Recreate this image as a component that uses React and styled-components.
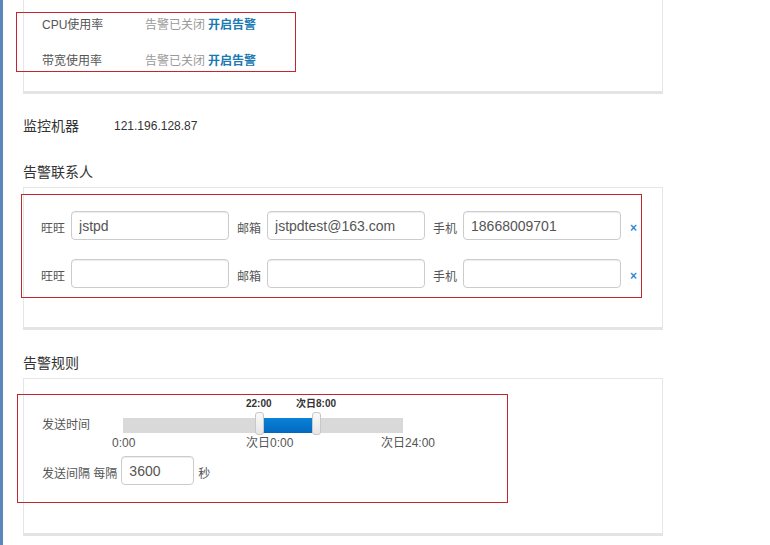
import React from "react";
import styled, { createGlobalStyle } from "styled-components";

const GlobalStyle = createGlobalStyle`
  html, body { margin: 0; padding: 0; background: #fff; }
  body {
    font-family: "Liberation Sans", Arial, "Noto Sans CJK SC", sans-serif;
    font-size: 12px;
    color: #555;
  }
`;

const Page = styled.div`
  display: flex;
  height: 545px;
  overflow: hidden;
`;

const Strip = styled.div`
  width: 3px;
  flex-shrink: 0;
  background: #5b88ba;
`;

const Main = styled.div`
  padding-left: 20px;
  width: 640px;
`;

const Panel = styled.div`
  box-sizing: border-box;
  border: 1px solid #e6e6e6;
  border-top: ${(p) => (p.$open ? "none" : "1px solid #e6e6e6")};
  border-bottom: 3px solid #e4e4e4;
  padding: ${(p) => p.$top}px 0 ${(p) => p.$bottom}px;
`;

const Highlight = styled.div`
  box-sizing: border-box;
  border: 1px solid #c1272d;
  margin-left: ${(p) => p.$shift}px;
  width: ${(p) => p.$w}px;
  height: ${(p) => p.$h}px;
  padding: ${(p) => p.$pad};
  display: flex;
  flex-direction: column;
  gap: ${(p) => p.$gap || 0}px;
`;

const StatusRow = styled.div`
  display: flex;
  line-height: 16px;
  font-size: 12px;
`;

const StatusName = styled.span`
  width: 103px;
  color: #555;
`;

const StatusOff = styled.span`
  color: #999;
`;

const StatusLink = styled.a`
  color: #1a78b2;
  font-weight: bold;
  text-decoration: none;
  margin-left: 3px;
`;

const InfoRow = styled.div`
  display: flex;
  align-items: center;
  margin-top: 22px;
  line-height: 20px;
`;

const InfoLabel = styled.span`
  width: 91px;
  font-size: 14px;
  color: #333;
`;

const InfoValue = styled.span`
  font-size: 12px;
  color: #333;
`;

const Heading = styled.div`
  margin: ${(p) => p.$mt}px 0 5px;
  font-size: 14px;
  line-height: 20px;
  color: #333;
`;

const ContactRow = styled.div`
  display: flex;
  align-items: center;
  height: 29px;
  gap: 8px;
`;

const Field = styled.div`
  display: flex;
  align-items: center;
  gap: 6px;
`;

const FieldLabel = styled.span`
  padding-top: 6px;
  line-height: 16px;
  font-size: 12px;
  color: #555;
`;

const TextInput = styled.input`
  box-sizing: border-box;
  width: ${(p) => p.$w}px;
  height: 29px;
  border: 1px solid #ccc;
  border-radius: 4px;
  padding: 0 7px;
  font-family: "Liberation Sans", Arial, sans-serif;
  font-size: 14px;
  color: #555;
  background: #fff;
  box-shadow: inset 0 1px 1px rgba(0, 0, 0, 0.075);
  outline: none;
`;

const Remove = styled.span`
  margin-left: 1px;
  padding-top: 4px;
  font-size: 12px;
  font-weight: bold;
  color: #2d8ad6;
  cursor: pointer;
`;

const TimeRow = styled.div`
  display: flex;
  align-items: center;
  padding-top: 22px;
`;

const RuleLabel = styled.span`
  width: 81px;
  line-height: 16px;
  font-size: 12px;
  color: #555;
`;

const Track = styled.div`
  position: relative;
  width: 280px;
  height: 15px;
  background: #d9d9d9;
`;

const Fill = styled.div`
  position: absolute;
  top: 0;
  height: 15px;
  background: linear-gradient(#0b82d9, #0069bf);
`;

const Handle = styled.div`
  position: absolute;
  top: -6px;
  box-sizing: border-box;
  width: 9px;
  height: 23px;
  border: 1px solid #c8c8c8;
  border-radius: 3px;
  background: linear-gradient(#fafafa, #e6e6e6);
`;

const HandleLabel = styled.span`
  position: absolute;
  top: -20px;
  line-height: 12px;
  font-size: 10px;
  font-weight: bold;
  color: #333;
  white-space: nowrap;
`;

const AxisLabel = styled.span`
  position: absolute;
  top: 17px;
  line-height: 16px;
  font-size: 12px;
  color: #555;
  white-space: nowrap;
`;

const IntervalRow = styled.div`
  display: flex;
  align-items: center;
  height: 29px;
  margin-top: 23px;
`;

const InlineText = styled.span`
  padding-top: 6px;
  line-height: 16px;
  font-size: 12px;
  color: #555;
  margin-left: ${(p) => p.$ml || 0}px;
  margin-right: ${(p) => p.$mr || 0}px;
`;

const statuses = ["CPU使用率", "带宽使用率"];

const contacts = [
  { ww: "jstpd", mail: "jstpdtest@163.com", phone: "18668009701" },
  { ww: "", mail: "", phone: "" },
];

const handles = [
  { left: 132, label: "22:00", labelLeft: 123 },
  { left: 189, label: "次日8:00", labelLeft: 173 },
];

const axis = [
  { left: -11, text: "0:00" },
  { left: 123, text: "次日0:00" },
  { left: 258, text: "次日24:00" },
];

export default function App() {
  return (
    <>
      <GlobalStyle />
      <Page>
        <Strip />
        <Main>
          <Panel $open $top={12} $bottom={19}>
            <Highlight $shift={-8} $w={280} $h={60} $pad="4px 0 0 25px" $gap={20}>
              {statuses.map((s) => (
                <StatusRow key={s}>
                  <StatusName>{s}</StatusName>
                  <StatusOff>告警已关闭</StatusOff>
                  <StatusLink href="#">开启告警</StatusLink>
                </StatusRow>
              ))}
            </Highlight>
          </Panel>

          <InfoRow>
            <InfoLabel>监控机器</InfoLabel>
            <InfoValue>121.196.128.87</InfoValue>
          </InfoRow>

          <Heading $mt={26}>告警联系人</Heading>
          <Panel $top={6} $bottom={29}>
            <Highlight $shift={-3} $w={621} $h={104} $pad="16px 0 0 19px" $gap={19}>
              {contacts.map((c, i) => (
                <ContactRow key={i}>
                  <Field>
                    <FieldLabel>旺旺</FieldLabel>
                    <TextInput $w={158} defaultValue={c.ww} />
                  </Field>
                  <Field>
                    <FieldLabel>邮箱</FieldLabel>
                    <TextInput $w={158} defaultValue={c.mail} />
                  </Field>
                  <Field>
                    <FieldLabel>手机</FieldLabel>
                    <TextInput $w={158} defaultValue={c.phone} />
                  </Field>
                  <Remove>×</Remove>
                </ContactRow>
              ))}
            </Highlight>
          </Panel>

          <Heading $mt={23}>告警规则</Heading>
          <Panel $top={15} $bottom={30}>
            <Highlight $shift={-7} $w={491} $h={109} $pad="0 0 0 24px">
              <TimeRow>
                <RuleLabel>发送时间</RuleLabel>
                <Track>
                  <Fill style={{ left: 140, width: 49 }} />
                  {handles.map((h) => (
                    <React.Fragment key={h.label}>
                      <Handle style={{ left: h.left }} />
                      <HandleLabel style={{ left: h.labelLeft }}>{h.label}</HandleLabel>
                    </React.Fragment>
                  ))}
                  {axis.map((a) => (
                    <AxisLabel key={a.text} style={{ left: a.left }}>
                      {a.text}
                    </AxisLabel>
                  ))}
                </Track>
              </TimeRow>
              <IntervalRow>
                <InlineText $mr={4}>发送间隔 每隔</InlineText>
                <TextInput $w={73} defaultValue="3600" />
                <InlineText $ml={4}>秒</InlineText>
              </IntervalRow>
            </Highlight>
          </Panel>
        </Main>
      </Page>
    </>
  );
}
